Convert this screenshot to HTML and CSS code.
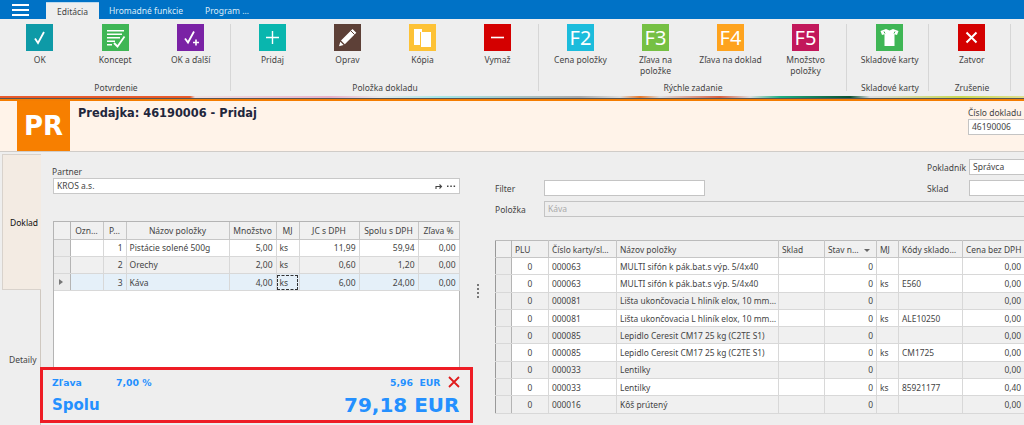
FILE: index.html
```html
<!DOCTYPE html>
<html lang="sk">
<head>
<meta charset="utf-8">
<title>Predajka</title>
<link rel="stylesheet" href="styles.css">
</head>
<body>
<div class="app">
  <nav class="tabbar">
    <button class="burger"><span></span><span></span><span></span></button>
    <span class="tab active">Editácia</span>
    <span class="tab">Hromadné funkcie</span>
    <span class="tab">Program …</span>
  </nav>
  <section class="ribbon">
    <div class="group g1">
      <div class="btns">
        <div class="rbtn"><svg class="ico" viewBox="0 0 27 27"><rect width="27" height="27" fill="#0e9aa7"/><path d="M9 14.500l3 4.500 6-11" fill="none" stroke="#fff" stroke-width="1.800"/></svg><span>OK</span></div>
        <div class="rbtn"><svg class="ico" viewBox="0 0 27 27"><rect width="27" height="27" fill="#3fb655"/><path d="M5 6h17v1.400H5zM5 9.500h15v1.400H5zM5 13h13v1.400H5zM5 16.500h8v1.400H5zM5 20h5v1.400H5z" fill="#fff"/><path d="M12 19l3.500 3.500 7-10" fill="none" stroke="#fff" stroke-width="1.800"/></svg><span>Koncept</span></div>
        <div class="rbtn"><svg class="ico" viewBox="0 0 27 27"><rect width="27" height="27" fill="#7a22a5"/><path d="M8 14.500l3 4 6-11" fill="none" stroke="#fff" stroke-width="1.800"/><path d="M16 18.500h6M19 15.500v6" stroke="#fff" stroke-width="1.600"/></svg><span>OK a ďalší</span></div>
      </div>
      <div class="glabel">Potvrdenie</div>
    </div>
    <div class="group">
      <div class="btns">
        <div class="rbtn"><svg class="ico" viewBox="0 0 27 27"><rect width="27" height="27" fill="#09b6ae"/><path d="M7 13.500h13M13.500 7v13" stroke="#fff" stroke-width="1.400"/></svg><span>Pridaj</span></div>
        <div class="rbtn"><svg class="ico" viewBox="0 0 27 27"><rect width="27" height="27" fill="#5d4037"/><path d="M18.500 5l3.800 3.800-11.500 11.500-3.800-3.800zM6.300 17.700l3.300 3.300-4.600 1.300z" fill="#fff"/><path d="M16.800 6.800l3.800 3.800" stroke="#5d4037" stroke-width="1"/></svg><span>Oprav</span></div>
        <div class="rbtn"><svg class="ico" viewBox="0 0 27 27"><rect width="27" height="27" fill="#fdc236"/><path d="M5 5h8v3h-2v13H5z" fill="#fff"/><path d="M12 8h10v15H12z" fill="#fff"/></svg><span>Kópia</span></div>
        <div class="rbtn"><svg class="ico" viewBox="0 0 27 27"><rect width="27" height="27" fill="#d40000"/><path d="M7 13.500h13" stroke="#fff" stroke-width="1.600"/></svg><span>Vymaž</span></div>
      </div>
      <div class="glabel">Položka dokladu</div>
    </div>
    <div class="group">
      <div class="btns">
        <div class="rbtn"><b class="fkey f2">F2</b><span>Cena položky</span></div>
        <div class="rbtn"><b class="fkey f3">F3</b><span>Zľava na<br>položke</span></div>
        <div class="rbtn"><b class="fkey f4">F4</b><span>Zľava na doklad</span></div>
        <div class="rbtn"><b class="fkey f5">F5</b><span>Množstvo<br>položky</span></div>
      </div>
      <div class="glabel">Rýchle zadanie</div>
    </div>
    <div class="group g4">
      <div class="btns">
        <div class="rbtn"><svg class="ico" viewBox="0 0 27 27"><rect width="27" height="27" fill="#3fb655"/><path d="M10 5l3.500 1.500L17 5l5.500 2-1.500 4-2.500-.8V22H8.500V10.200L6 11 4.500 7z" fill="#fff"/><path d="M8 7.500l1 2M19 7.500l-1 2" stroke="#3fb655"/></svg><span>Skladové karty</span></div>
      </div>
      <div class="glabel">Skladové karty</div>
    </div>
    <div class="group g4">
      <div class="btns">
        <div class="rbtn"><svg class="ico" viewBox="0 0 27 27"><rect width="27" height="27" fill="#d40000"/><path d="M8.500 8.500l10 10M18.500 8.500l-10 10" stroke="#fff" stroke-width="2"/></svg><span>Zatvor</span></div>
      </div>
      <div class="glabel">Zrušenie</div>
    </div>
  </section>
  <div class="strip"></div>
  <header class="dochead">
    <div class="pr">PR</div>
    <h1>Predajka: 46190006 - Pridaj</h1>
    <div class="docno">
      <label>Číslo dokladu</label>
      <div class="field">46190006</div>
    </div>
  </header>
  <main class="body">
    <aside class="sidetabs">
      <div class="stab on">Doklad</div>
      <div class="stab">Detaily</div>
    </aside>
    <section class="left">
      <div class="leftinner">
        <label class="plabel">Partner</label>
        <div class="field partner"><span>KROS a.s.</span><span class="pico">
          <svg width="8" height="8" viewBox="0 0 8 8"><path d="M1 7V4.500h5M4.500 2.500L6.500 4.500 4.500 6.500" fill="none" stroke="#444" stroke-width="1.100"/></svg>
          <svg width="10" height="8" viewBox="0 0 10 8"><path d="M1 3.500h1.500v1.500H1zM4.300 3.500h1.500v1.500H4.300zM7.600 3.500h1.500v1.500H7.600z" fill="#444"/></svg>
        </span></div>
        <div class="gridbox">
          <table class="grid lt">
            <colgroup><col class="l0"><col class="l1"><col class="l2"><col class="l3"><col class="l4"><col class="l5"><col class="l6"><col class="l7"><col class="l8"></colgroup>
            <thead><tr><th></th><th>Ozn…</th><th>P…</th><th>Názov položky</th><th>Množstvo</th><th>MJ</th><th>JC s DPH</th><th>Spolu s DPH</th><th>Zľava %</th></tr></thead>
            <tbody>
              <tr><td class="rh"></td><td></td><td class="r">1</td><td>Pistácie solené 500g</td><td class="r">5,00</td><td>ks</td><td class="r">11,99</td><td class="r">59,94</td><td class="r">0,00</td></tr>
              <tr class="alt"><td class="rh"></td><td></td><td class="r">2</td><td>Orechy</td><td class="r">2,00</td><td>ks</td><td class="r">0,60</td><td class="r">1,20</td><td class="r">0,00</td></tr>
              <tr class="sel"><td class="rh"><i class="arrow"></i></td><td></td><td class="r">3</td><td>Káva</td><td class="r">4,00</td><td class="focus">ks</td><td class="r">6,00</td><td class="r">24,00</td><td class="r">0,00</td></tr>
            </tbody>
          </table>
        </div>
      </div>
      <div class="summary">
        <div class="sumrow1"><span class="sz">Zľava</span><span class="spct">7,00 %</span><span class="samt">5,96 &nbsp;EUR</span><svg class="sx" width="12" height="12" viewBox="0 0 12 12"><path d="M1 1l10 10M11 1L1 11" stroke="#e01b1b" stroke-width="1.800"/></svg></div>
        <div class="sumrow2"><span class="st">Spolu</span><span class="stv">79,18 EUR</span></div>
      </div>
    </section>
    <div class="splitter"><span></span><span></span><span></span><span></span></div>
    <section class="right">
      <div class="form">
        <label class="lab2">Pokladník</label><div class="field fval">Správca</div>
        <label>Filter</label><div class="field"></div><label class="lab2">Sklad</label><div class="field fval"></div>
        <label>Položka</label><div class="field disabled">Káva</div>
      </div>
      <table class="grid rt">
        <colgroup><col class="r0"><col class="r1"><col class="r2"><col class="r3"><col class="r4"><col class="r5"><col class="r6"><col class="r7"><col class="r8"></colgroup>
        <thead><tr><th></th><th class="tl">PLU</th><th class="tl">Číslo karty/sl…</th><th class="tl">Názov položky</th><th class="tl">Sklad</th><th class="tl">Stav n… <i class="sort"></i></th><th class="tl">MJ</th><th class="tl">Kódy sklado…</th><th class="tl">Cena bez DPH</th></tr></thead>
        <tbody>
          <tr><td class="rh"></td><td class="c">0</td><td>000063</td><td>MULTI sifón k pák.bat.s výp. 5/4x40</td><td></td><td class="r">0</td><td></td><td></td><td class="r">0,00</td></tr>
          <tr><td class="rh"></td><td class="c">0</td><td>000063</td><td>MULTI sifón k pák.bat.s výp. 5/4x40</td><td></td><td class="r">0</td><td>ks</td><td>E560</td><td class="r">0,00</td></tr>
          <tr class="alt"><td class="rh"></td><td class="c">0</td><td>000081</td><td>Lišta ukončovacia L hliník elox, 10 mm…</td><td></td><td class="r">0</td><td></td><td></td><td class="r">0,00</td></tr>
          <tr><td class="rh"></td><td class="c">0</td><td>000081</td><td>Lišta ukončovacia L hliník elox, 10 mm…</td><td></td><td class="r">0</td><td>ks</td><td>ALE10250</td><td class="r">0,00</td></tr>
          <tr class="alt"><td class="rh"></td><td class="c">0</td><td>000085</td><td>Lepidlo Ceresit CM17 25 kg (C2TE S1)</td><td></td><td class="r">0</td><td></td><td></td><td class="r">0,00</td></tr>
          <tr><td class="rh"></td><td class="c">0</td><td>000085</td><td>Lepidlo Ceresit CM17 25 kg (C2TE S1)</td><td></td><td class="r">0</td><td>ks</td><td>CM1725</td><td class="r">0,00</td></tr>
          <tr class="alt"><td class="rh"></td><td class="c">0</td><td>000033</td><td>Lentilky</td><td></td><td class="r">0</td><td></td><td></td><td class="r">0,00</td></tr>
          <tr><td class="rh"></td><td class="c">0</td><td>000033</td><td>Lentilky</td><td></td><td class="r">0</td><td>ks</td><td>85921177</td><td class="r">0,40</td></tr>
          <tr class="alt"><td class="rh"></td><td class="c">0</td><td>000016</td><td>Kôš prútený</td><td></td><td class="r">0</td><td></td><td></td><td class="r">0,00</td></tr>
        </tbody>
      </table>
    </section>
  </main>
</div>
</body>
</html>
```
FILE: styles.css
```css
* { box-sizing: border-box; }
html, body { margin: 0; padding: 0; }
body { font-family: "Noto Sans", "DejaVu Sans", sans-serif; font-size: 8.5px; color: #444; background: #eee; }
.app { width: 1024px; height: 425px; overflow: hidden; display: flex; flex-direction: column; }

.tabbar { height: 19px; background: #0072c6; display: flex; align-items: flex-end; flex: none; }
.burger { width: 46px; height: 19px; padding: 0 0 0 12px; border: 0; background: none; display: flex; flex-direction: column; justify-content: center; gap: 3px; }
.burger span { display: block; width: 17px; height: 2px; background: #fff; }
.tab { height: 17px; padding: 0 10px; line-height: 18px; color: #dcecf8; font-size: 8.5px; }
.tab:last-child { padding-left: 12px; }
.tab.active { width: 53px; padding: 0; text-align: center; background: #eee; color: #444; border-top: 1px solid #bcd9ee; }

.ribbon { height: 77px; flex: none; background: #eee; display: flex; padding-top: 5px; }
.group { width: 308px; height: 67px; padding: 0 3px 0 4px; border-right: 1px solid #d6d6d6; display: flex; flex-direction: column; flex: none; }
.g1 { width: 231px; padding: 0 0 0 2px; }
.g4 { width: 82px; padding: 0 0 0 5px; }
.btns { display: flex; flex: 1; }
.rbtn { width: 75.5px; display: flex; flex-direction: column; align-items: center; text-align: center; line-height: 11px; }
.rbtn span { margin-top: 3px; white-space: nowrap; }
.ico { width: 27px; height: 27px; display: block; flex: none; }
.fkey { width: 27px; height: 27px; display: block; flex: none; color: #fff; font-weight: 400; font-size: 20px; line-height: 27px; text-align: center; }
.f2 { background: #1cbcdc; }
.f3 { background: #76c043; }
.f4 { background: #fea31e; }
.f5 { background: #c2185b; }
.glabel { height: 14px; margin-bottom: -4px; line-height: 14px; text-align: center; white-space: nowrap; }

.strip { height: 5px; flex: none; border-bottom: 2px solid #f57c00; background: linear-gradient(#0000 0 2px, #555 2px), linear-gradient(90deg, #e85a2c 0 190px, #f0dfe0 195px, #e8b0c8 330px, #e8e8e8 380px, #a5e6e6 440px, #aaa 580px, #ddd 620px, #e8792c 640px, #ddd 660px, #d96040 720px, #ddd 750px, #1fb080 780px, #0a5030 850px, #ddd 870px, #c8d850 960px, #e0e090 1024px); }

.dochead { height: 51px; flex: none; background: #fff3e9; border-bottom: 1px solid #d0ccc8; display: flex; padding-left: 17px; }
.pr { width: 53px; background: #f77f00; color: #fff; font-family: "DejaVu Sans", sans-serif; font-weight: 700; font-size: 26px; line-height: 51px; text-align: center; flex: none; }
h1 { margin: 6px 0 0 8px; font-family: "DejaVu Sans", sans-serif; font-size: 11.400px; line-height: 13px; font-weight: 700; color: #22263c; flex: 1; }
.docno { width: 56px; flex: none; padding-top: 6px; }
.docno label { display: block; line-height: 12px; white-space: nowrap; }
.field { height: 16px; background: #fff; border: 1px solid #c4c4c4; padding: 0 3px; line-height: 14px; white-space: nowrap; }
.docno .field { border-right: 0; }

.body { flex: 1; display: flex; min-height: 0; }
.sidetabs { width: 41px; flex: none; display: flex; flex-direction: column; padding-top: 2px; }
.stab { flex: 1; margin-left: 2px; padding: 4px 0 0 7px; display: flex; align-items: center; border-right: 1px solid #cfc8c0; }
.stab.on { flex: none; height: 136px; padding-top: 0; background: #f3ebe3; color: #111; border: 1px solid #d8d2cc; border-right: 0; }

.left { width: 433px; flex: none; display: flex; flex-direction: column; margin-left: -1px; position: relative; z-index: 1; }
.leftinner { flex: 1; min-height: 0; padding: 14px 13px 0 13px; display: flex; flex-direction: column; }
.plabel { line-height: 12px; margin-left: -1px; }
.partner { display: flex; justify-content: space-between; align-items: center; border-color: #c8c8c8; flex: none; }
.pico { display: flex; gap: 3px; align-items: center; }
.gridbox { margin-top: 27px; flex: 1; background: #fff; border: 1px solid #b4b4b4; border-bottom: 0; min-height: 0; }

.grid { border-collapse: collapse; table-layout: fixed; }
.grid th { height: 17px; padding: 0 3px; background: #f0f0f0; border: 1px solid #c6c6c6; border-top: 0; font-weight: 400; text-align: center; white-space: nowrap; overflow: hidden; }
.grid td { height: 17.300px; padding: 0 3px; background: #fff; border: 1px solid #d8d8d8; border-top: 0; white-space: nowrap; overflow: hidden; }
.grid th:first-child, .grid td:first-child { border-left: 0; }
.grid tr.alt td { background: #f0f0f0; }
.grid tr.sel td { background: #e5f0f9; }
.grid td.rh { background: #ececec !important; border-right-color: #b4b4b4; }
.grid th:first-child { border-right-color: #b4b4b4; }
.grid td.r { text-align: right; }
.grid td.c { text-align: center; }
.grid th.tl { text-align: left; }
.grid td.focus { outline: 1px dashed #333; outline-offset: -2px; }
.arrow { display: block; width: 0; height: 0; margin: 0 0 0 2px; border-left: 4px solid #777; border-top: 3px solid transparent; border-bottom: 3px solid transparent; }
.sort { display: inline-block; width: 0; height: 0; margin-left: 3px; vertical-align: 1px; border-top: 3px solid #666; border-left: 3px solid transparent; border-right: 3px solid transparent; }

.lt { width: 405px; }
.l0 { width: 16px; } .l1 { width: 33px; } .l2 { width: 23px; } .l3 { width: 103px; } .l4 { width: 47px; } .l5 { width: 23px; } .l6 { width: 60px; } .l7 { width: 59px; } .l8 { width: 41px; }

.summary { flex: none; height: 56px; margin-bottom: 2px; border: 3.500px solid #ee1c25; background: #eee; padding: 0 10.500px 0 9px; color: #2490ff; font-family: "DejaVu Sans", sans-serif; font-weight: 700; }
.sumrow1 { display: flex; align-items: center; height: 20px; font-size: 9.300px; margin-top: 2px; }
.sz { width: 64px; }
.spct { flex: 1; }
.samt { margin-right: 7px; }
.sx { flex: none; }
.sumrow2 { display: flex; justify-content: space-between; align-items: center; height: 26px; }
.st { font-size: 15px; }
.stv { font-size: 20px; }

.splitter { width: 16px; flex: none; display: flex; flex-direction: column; align-items: flex-start; justify-content: center; gap: 2px; padding: 5px 0 0 4px; }
.splitter span { width: 2px; height: 2px; background: #777; }

.right { flex: 1; min-width: 0; overflow: hidden; padding: 7px 0 0 6px; }
.form { display: grid; grid-template-columns: 49px 161px 222px 42px 55px; grid-auto-rows: 16px; row-gap: 5px; align-items: center; }
.form label { white-space: nowrap; }
.lab2 { grid-column: 4; }
.fval { grid-column: 5; border-right: 0; }
.disabled { grid-column: 2 / 6; background: #eee; border-color: #c4c4c4; border-right: 0; color: #aaa; }
.rt { margin-top: 23px; width: 529px; font-size: 8.400px; border-left: 1px solid #999; border-bottom: 1px solid #999; border-top: 1px solid #bbb; }
.r0 { width: 16px; } .r1 { width: 37px; } .r2 { width: 68px; } .r3 { width: 162px; } .r4 { width: 46px; } .r5 { width: 52px; } .r6 { width: 22px; } .r7 { width: 64px; } .r8 { width: 62px; }
```
